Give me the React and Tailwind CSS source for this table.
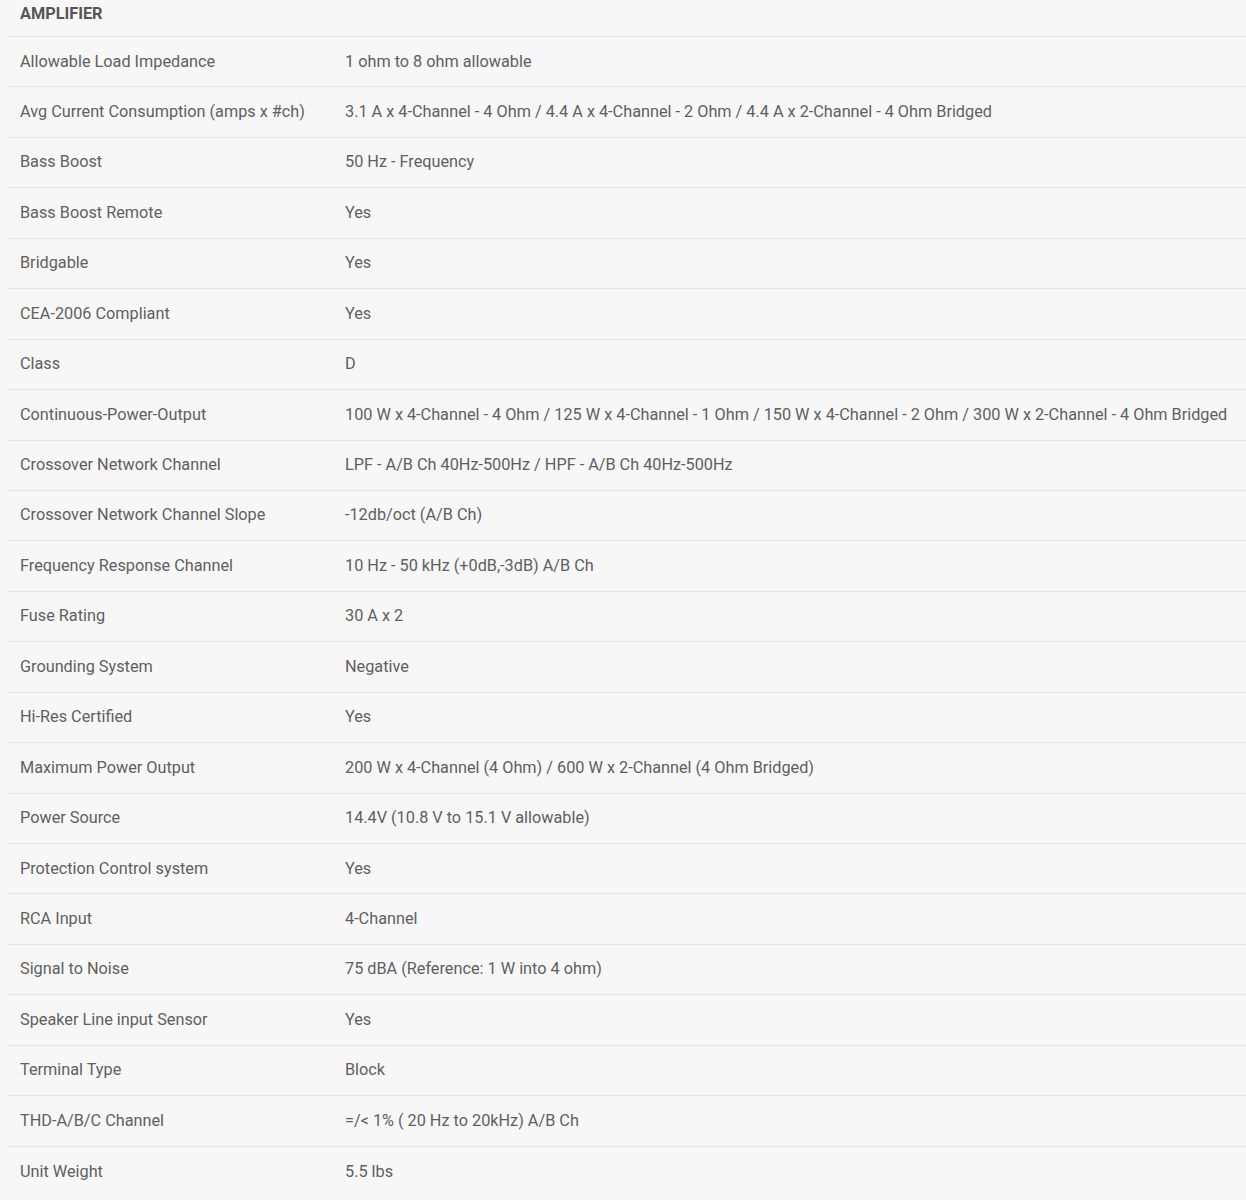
const specs = [
  ['Allowable Load Impedance', '1 ohm to 8 ohm allowable'],
  ['Avg Current Consumption (amps x #ch)', '3.1 A x 4-Channel - 4 Ohm / 4.4 A x 4-Channel - 2 Ohm / 4.4 A x 2-Channel - 4 Ohm Bridged'],
  ['Bass Boost', '50 Hz - Frequency'],
  ['Bass Boost Remote', 'Yes'],
  ['Bridgable', 'Yes'],
  ['CEA-2006 Compliant', 'Yes'],
  ['Class', 'D'],
  ['Continuous-Power-Output', '100 W x 4-Channel - 4 Ohm / 125 W x 4-Channel - 1 Ohm / 150 W x 4-Channel - 2 Ohm / 300 W x 2-Channel - 4 Ohm Bridged'],
  ['Crossover Network Channel', 'LPF - A/B Ch 40Hz-500Hz / HPF - A/B Ch 40Hz-500Hz'],
  ['Crossover Network Channel Slope', '-12db/oct (A/B Ch)'],
  ['Frequency Response Channel', '10 Hz - 50 kHz (+0dB,-3dB) A/B Ch'],
  ['Fuse Rating', '30 A x 2'],
  ['Grounding System', 'Negative'],
  ['Hi-Res Certified', 'Yes'],
  ['Maximum Power Output', '200 W x 4-Channel (4 Ohm) / 600 W x 2-Channel (4 Ohm Bridged)'],
  ['Power Source', '14.4V (10.8 V to 15.1 V allowable)'],
  ['Protection Control system', 'Yes'],
  ['RCA Input', '4-Channel'],
  ['Signal to Noise', '75 dBA (Reference: 1 W into 4 ohm)'],
  ['Speaker Line input Sensor', 'Yes'],
  ['Terminal Type', 'Block'],
  ['THD-A/B/C Channel', '=/< 1% ( 20 Hz to 20kHz) A/B Ch'],
  ['Unit Weight', '5.5 lbs'],
];

export default function App() {
  return (
    <div className="min-h-[1200px] bg-[#f7f7f7] pl-2 font-['Roboto',sans-serif] text-[#5f5f5f]">
      {/* Section header */}
      <div className="h-[37px] border-b border-[#e6e6e6] px-3 pt-[4px] text-[16.3px] font-bold uppercase leading-[20px] text-[#555]">
        Amplifier
      </div>

      {/* Spec rows */}
      {specs.map(([label, value], i) => (
        <div
          key={label}
          className={
            'flex h-[50.45px] items-center text-[16.25px] ' +
            (i < specs.length - 1 ? 'border-b border-[#e6e6e6]' : '')
          }
        >
          <div className="w-[325px] shrink-0 px-3">{label}</div>
          <div className="px-3 whitespace-nowrap">{value}</div>
        </div>
      ))}
    </div>
  );
}
